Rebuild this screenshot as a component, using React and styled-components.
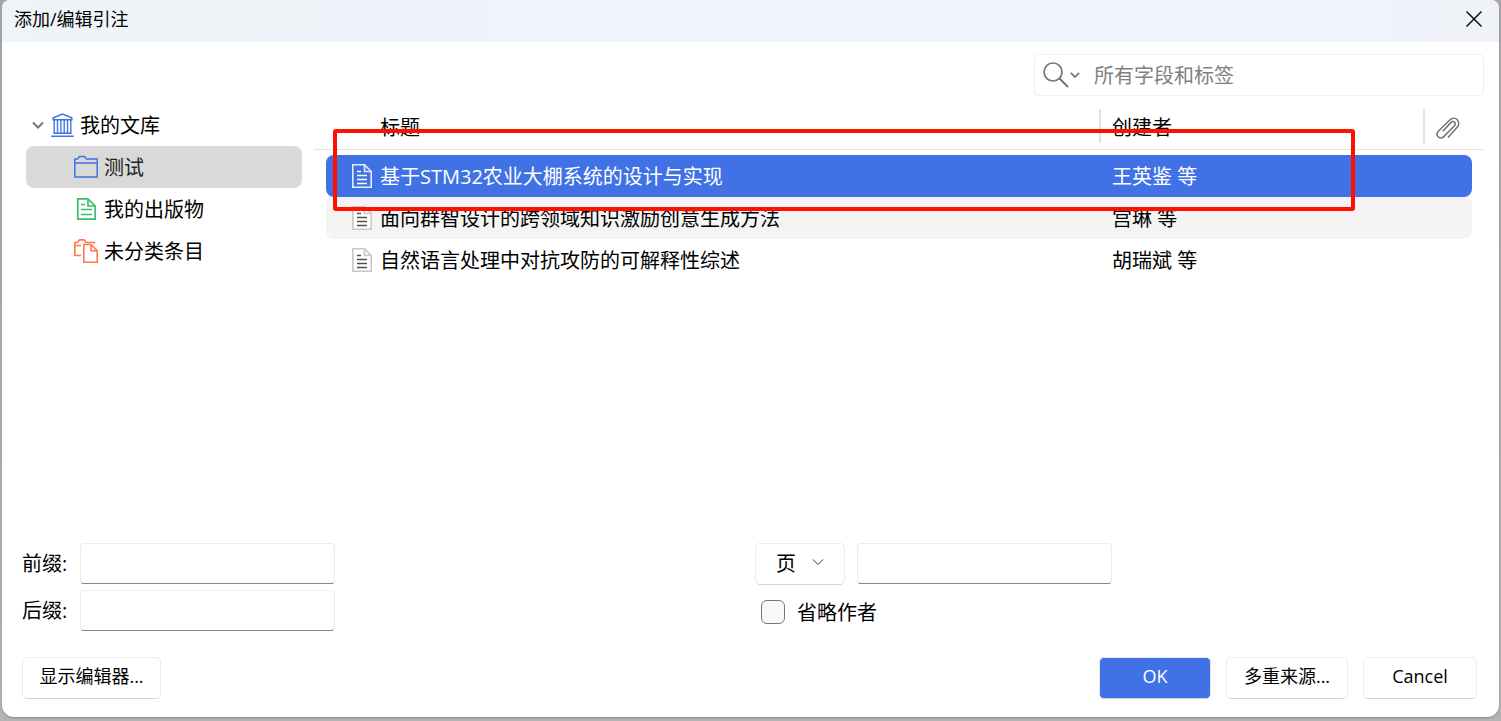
import React, { useState } from "react";
import styled, { createGlobalStyle, css } from "styled-components";

const collections = [
  { id: "test", label: "测试", icon: "folder" },
  { id: "publications", label: "我的出版物", icon: "publications" },
  { id: "unfiled", label: "未分类条目", icon: "unfiled" },
];

const items = [
  { id: 1, title: "基于STM32农业大棚系统的设计与实现", creator: "王英鉴 等" },
  { id: 2, title: "面向群智设计的跨领域知识激励创意生成方法", creator: "宫琳 等" },
  { id: 3, title: "自然语言处理中对抗攻防的可解释性综述", creator: "胡瑞斌 等" },
];

const ChevronIcon = ({ width = 12, stroke = 2, color = "#757575" }) => (
  <svg width={width} height="8" viewBox="0 0 12 8" fill="none" aria-hidden="true">
    <path d="M1 1.5 L6 6.5 L11 1.5" stroke={color} strokeWidth={stroke} />
  </svg>
);

const LibraryIcon = () => (
  <svg width="24" height="24" viewBox="0 0 24 24" fill="none" stroke="#4072e5" aria-hidden="true">
    <path d="M3.2 6.8 V4.8 L12.5 1 L21.8 4.8 V6.8 Z" strokeWidth="1.5" />
    <path d="M4.2 7 V20 M7.5 7 V20 M10.9 7 V20 M14.2 7 V20 M17.5 7 V20 M20.8 7 V20" strokeWidth="1.4" />
    <path d="M3.5 20.3 H21.5 M1.2 23.2 H23.8" strokeWidth="1.6" />
  </svg>
);

const FolderIcon = () => (
  <svg width="24" height="24" viewBox="0 0 24 24" fill="none" stroke="#4072e5" strokeWidth="1.5" aria-hidden="true">
    <path d="M0.8 22 V4 H3.5 L5.5 1.5 H10.5 L12.5 4 H23.2 V22 Z M0.8 8 H23.2" strokeLinejoin="round" />
  </svg>
);

const PublicationsIcon = () => (
  <svg width="24" height="24" viewBox="0 0 24 24" fill="none" stroke="#39bf68" strokeWidth="1.7" aria-hidden="true">
    <path d="M3.8 1.8 H14 L21.2 9 V22.2 H3.8 Z M14 1.8 V9 H21.2" />
    <path d="M7 7.5 H11 M7 12.5 H18 M7 17.5 H18" />
  </svg>
);

const UnfiledIcon = () => (
  <svg width="24" height="24" viewBox="0 0 24 24" fill="none" stroke="#ff794c" strokeWidth="1.6" aria-hidden="true">
    <path d="M7 16.5 H0.8 V3.5 H3.5 L5.5 0.9 H10 L12 3.5 H20.5 V4.5 M0.8 6.5 H7" />
    <path d="M9.8 5.5 H17 L23.2 11.7 V23.2 H9.8 Z M17 5.5 V11.7 H23.2" />
  </svg>
);

const ItemIcon = ({ $selected }) => {
  const frame = $selected ? "#e4ebfb" : "#c8c8c8";
  const lines = $selected ? "#ffffff" : "#4f4f4f";
  return (
    <svg width="20" height="24" viewBox="0 0 20 24" fill="none" aria-hidden="true">
      <path d="M0.8 0.8 H12.5 L19.2 7.5 V23.2 H0.8 Z" fill={$selected ? "none" : "#fff"} stroke={frame} strokeWidth="1.6" />
      <path d="M12.5 0.8 V7.5 H19.2" stroke={frame} strokeWidth="1.6" />
      <path d="M5 7.5 H9 M5 11.5 H15 M5 15.5 H15 M5 19.5 H15" stroke={lines} strokeWidth="1.6" />
    </svg>
  );
};

const SearchIcon = () => (
  <svg width="26" height="26" viewBox="0 0 26 26" fill="none" stroke="#757575" strokeWidth="1.7" aria-hidden="true">
    <circle cx="10" cy="10" r="9" />
    <path d="M16.3 16.3 L25 25" strokeWidth="2" />
  </svg>
);

const AttachmentIcon = () => (
  <svg width="24" height="22" viewBox="0 0 24 22" fill="none" stroke="#757575" strokeWidth="1.6" aria-hidden="true">
    <path d="M12 20.5 L21.2 10.2 C25.6 5.2 19.2 -2 14 2.8 L2.6 14 C-1.4 18.2 4 23.4 8 19.4 L18.2 9 C20.8 6 17.6 3 14.8 5.6 L6.8 14.2" />
  </svg>
);

const CloseIcon = () => (
  <svg width="16" height="16" viewBox="0 0 16 16" fill="none" stroke="#111" strokeWidth="1.5" aria-hidden="true">
    <path d="M0.5 0.5 L15.5 15.5 M15.5 0.5 L0.5 15.5" />
  </svg>
);

const icons = {
  folder: FolderIcon,
  publications: PublicationsIcon,
  unfiled: UnfiledIcon,
};

const App = () => {
  const [collection, setCollection] = useState("test");
  const [selectedItem, setSelectedItem] = useState(1);

  return (
    <Page>
      <GlobalStyle />
      <Dialog>
        <TitleBar>
          <Title>添加/编辑引注</Title>
          <CloseButton aria-label="关闭">
            <CloseIcon />
          </CloseButton>
        </TitleBar>

        <SearchRow>
          <SearchBox>
            <SearchMode aria-label="搜索模式">
              <SearchIcon />
              <ChevronIcon width={10} />
            </SearchMode>
            <SearchInput type="text" aria-label="搜索" placeholder="所有字段和标签" />
          </SearchBox>
        </SearchRow>

        <Content>
          <Tree>
            <TreeRow>
              <ChevronIcon />
              <LibraryIcon />
              <Label>我的文库</Label>
            </TreeRow>
            {collections.map(({ id, label, icon }) => {
              const Icon = icons[icon];
              return (
                <TreeRow key={id} $nested $selected={id === collection} onClick={() => setCollection(id)}>
                  <Icon />
                  <Label>{label}</Label>
                </TreeRow>
              );
            })}
          </Tree>

          <ItemsPane>
            <ItemsTable>
              <thead>
                <HeadRow>
                  <HeadCell>标题</HeadCell>
                  <HeadCell $divided>创建者</HeadCell>
                  <HeadCell $divided aria-label="附件">
                    <AttachmentIcon />
                  </HeadCell>
                </HeadRow>
              </thead>
              <ItemsBody>
                {items.map((item) => {
                  const selected = item.id === selectedItem;
                  return (
                    <ItemRow key={item.id} $selected={selected} onClick={() => setSelectedItem(item.id)}>
                      <TitleCell>
                        <ItemIcon $selected={selected} />
                        <Label>{item.title}</Label>
                      </TitleCell>
                      <CreatorCell>{item.creator}</CreatorCell>
                      <td />
                    </ItemRow>
                  );
                })}
              </ItemsBody>
            </ItemsTable>
            <Highlight />
          </ItemsPane>
        </Content>

        <Options>
          <OptionsColumn>
            <Field>
              <FieldLabel htmlFor="prefix">前缀:</FieldLabel>
              <TextInput id="prefix" type="text" />
            </Field>
            <Field>
              <FieldLabel htmlFor="suffix">后缀:</FieldLabel>
              <TextInput id="suffix" type="text" />
            </Field>
          </OptionsColumn>
          <OptionsColumn>
            <Locator>
              <SelectWrap>
                <Select aria-label="定位符类型" defaultValue="page">
                  <option value="page">页</option>
                  <option value="chapter">章</option>
                </Select>
                <ChevronIcon stroke={1} color="#333" />
              </SelectWrap>
              <TextInput type="text" aria-label="定位符" />
            </Locator>
            <CheckLabel>
              <Checkbox type="checkbox" />
              <Label>省略作者</Label>
            </CheckLabel>
          </OptionsColumn>
        </Options>

        <Footer>
          <Button $width={139}>显示编辑器...</Button>
          <ButtonGroup>
            <Button $primary $width={112}>OK</Button>
            <Button $width={122}>多重来源...</Button>
            <Button $width={114}>Cancel</Button>
          </ButtonGroup>
        </Footer>
      </Dialog>
    </Page>
  );
};

const GlobalStyle = createGlobalStyle`
  * {
    box-sizing: border-box;
  }

  body {
    margin: 0;
    font-family: "Open Sans", "Noto Sans CJK SC", sans-serif;
    font-size: 20px;
    line-height: 28px;
    color: #000;
  }

  button,
  input,
  select {
    font: inherit;
    color: inherit;
  }

  svg {
    flex-shrink: 0;
  }
`;

const Page = styled.div`
  display: flex;
  min-height: 100vh;
  padding: 0 2px 4px;
  background: linear-gradient(#a6a6a6, #b4b4b4);
`;

const Dialog = styled.main`
  flex: 1;
  display: flex;
  flex-direction: column;
  background: #fff;
  border-radius: 8px 8px 12px 12px;
  box-shadow: 0 1px 2px #888;
  overflow: hidden;
`;

const TitleBar = styled.header`
  display: flex;
  align-items: center;
  justify-content: space-between;
  height: 42px;
  padding: 0 17px 4px 12px;
  background: linear-gradient(90deg, #eff4f8, #eff3fb 50%, #eff3fb 90%, #eff3f7);
`;

const Title = styled.h1`
  margin: 0;
  font-size: 18px;
  font-weight: 400;
`;

const CloseButton = styled.button`
  display: flex;
  padding: 0;
  border: none;
  background: none;
`;

const SearchRow = styled.div`
  display: flex;
  justify-content: flex-end;
  padding: 12px 15px 0;
`;

const SearchBox = styled.div`
  display: flex;
  align-items: center;
  width: 450px;
  height: 42px;
  padding-left: 8px;
  border: 1px solid #f0f0f0;
  border-radius: 4px;
`;

const SearchMode = styled.button`
  display: flex;
  align-items: center;
  gap: 1px;
  padding: 0;
  border: none;
  background: none;
`;

const SearchInput = styled.input`
  flex: 1;
  min-width: 0;
  padding: 2px 14px 0;
  border: none;
  outline: none;
  background: none;

  &::placeholder {
    color: #808080;
    opacity: 1;
  }
`;

const Content = styled.div`
  flex: 1;
  display: flex;
  gap: 12px;
  padding: 4px 15px 0 24px;
`;

const Tree = styled.nav`
  width: 276px;
  padding-top: 4px;
`;

const TreeRow = styled.button`
  display: flex;
  align-items: center;
  gap: 6px;
  width: 100%;
  height: 42px;
  padding: 0 0 0 ${(props) => (props.$nested ? "48px" : "6px")};
  border: none;
  border-radius: 8px;
  background: ${(props) => (props.$selected ? "#d9d9d9" : "none")};
  color: ${(props) => (props.$selected ? "#222" : "#000")};
  text-align: left;
`;

const Label = styled.span`
  padding-top: 2px;
`;

const ItemsPane = styled.section`
  position: relative;
  flex: 1;
`;

const ItemsTable = styled.table`
  display: block;

  thead {
    display: block;
  }
`;

const HeadRow = styled.tr`
  display: grid;
  grid-template-columns: 1fr 324px 61px;
  padding: 9px 0 6px;
  border-bottom: 1px solid #e2e2e2;
`;

const HeadCell = styled.th`
  display: flex;
  align-items: center;
  height: 34px;
  padding: 3px 0 0 66px;
  font-weight: 400;

  ${(props) =>
    props.$divided &&
    css`
      padding-left: 11px;
      border-left: 2px solid #e2e2e2;
    `}
`;

const ItemsBody = styled.tbody`
  display: block;
  padding: 5px 12px;
`;

const ItemRow = styled.tr`
  display: grid;
  grid-template-columns: 1fr 324px 49px;
  align-items: center;
  height: 42px;
  border-radius: 8px;

  &:nth-child(even) {
    background: #f4f4f4;
  }

  ${(props) =>
    props.$selected &&
    css`
      && {
        background: #4072e5;
        color: #fff;
      }
    `}
`;

const TitleCell = styled.td`
  display: flex;
  align-items: center;
  gap: 8px;
  padding: 0 0 0 26px;
`;

const CreatorCell = styled.td`
  padding: 2px 0 0 13px;
`;

// Marks the item to pick, drawn over the table
const Highlight = styled.div`
  position: absolute;
  top: 29px;
  left: 19px;
  right: 129px;
  height: 82px;
  border: 4px solid #ff1100;
  border-radius: 3px;
  pointer-events: none;
`;

const Options = styled.div`
  display: grid;
  grid-template-columns: 1fr 1fr;
  gap: 11px;
  padding: 0 22px 0 20px;
`;

const OptionsColumn = styled.div`
  display: flex;
  flex-direction: column;
  gap: 6px;
`;

const Field = styled.div`
  display: flex;
  align-items: center;
`;

const FieldLabel = styled.label`
  width: 58px;
`;

const TextInput = styled.input`
  width: 255px;
  height: 41px;
  padding: 0 10px;
  border: 1px solid #ececec;
  border-bottom-color: #868686;
  border-radius: 4px;
  background: #fff;
`;

const Locator = styled.div`
  display: flex;
  gap: 12px;
  height: 41px;
`;

const SelectWrap = styled.div`
  position: relative;

  svg {
    position: absolute;
    top: 15px;
    right: 21px;
    pointer-events: none;
  }
`;

const Select = styled.select`
  appearance: none;
  width: 90px;
  height: 42px;
  padding: 0 20px;
  border: 1px solid #ececec;
  border-bottom-color: #d4d4d4;
  border-radius: 5px;
  background: #fff;
`;

const CheckLabel = styled.label`
  display: flex;
  align-items: center;
  gap: 12px;
  height: 41px;
  padding: 2px 6px 0;
`;

const Checkbox = styled.input`
  appearance: none;
  width: 24px;
  height: 24px;
  margin: 0;
  border: 1px solid #757575;
  border-radius: 6px;
  background: #f9f9f9;

  &:checked {
    background: #4072e5;
  }
`;

const Footer = styled.footer`
  display: flex;
  justify-content: space-between;
  padding: 26px 22px 18px 20px;
`;

const ButtonGroup = styled.div`
  display: flex;
  gap: 15px;
`;

const Button = styled.button`
  min-width: ${(props) => props.$width}px;
  height: 42px;
  padding: 0 12px 4px;
  border: 1px solid ${(props) => (props.$primary ? "#e4e9f5" : "#ececec")};
  border-bottom-color: #d4d4d4;
  border-radius: 5px;
  background: ${(props) => (props.$primary ? "#4072e5" : "#fff")};
  color: ${(props) => (props.$primary ? "#fff" : "#000")};
  font-size: 18px;
`;

export default App;
